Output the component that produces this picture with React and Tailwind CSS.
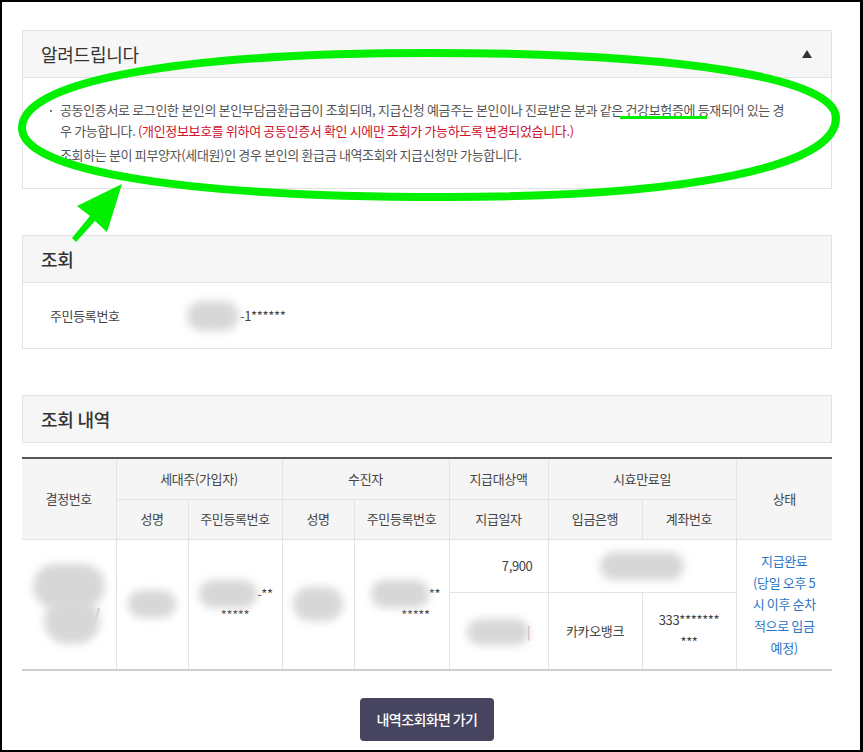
import React from "react";

function Blob({ c }) {
  return <span className={`inline-block shrink-0 rounded-full bg-[#d7d7d7] blur-[4px] ${c}`} />;
}

function PanelHeader({ title, weight, right }) {
  return (
    <div className="flex h-[46px] items-center justify-between bg-[#f6f6f6] pl-[18px] pr-[19px]">
      <h2 className={`text-[18px] tracking-[-0.25px] text-[#333] ${weight}`}>{title}</h2>
      {right}
    </div>
  );
}

export default function App() {
  return (
    <div className="relative h-[752px] w-[863px] overflow-hidden border-b-2 border-l-2 border-r-[3px] border-t-2 border-black bg-white font-['Noto_Sans_CJK_KR',sans-serif]">
      <div className="w-[830px] pl-5 pt-[28px]">
        {/* 알려드립니다 */}
        <section className="border border-[#e2e2e2]">
          <div className="border-b border-[#e2e2e2]">
            <PanelHeader
              title="알려드립니다"
              weight="font-normal"
              right={
                <svg width="10" height="8" viewBox="0 0 10 8">
                  <polygon points="5,0 10,8 0,8" fill="#333" />
                </svg>
              }
            />
          </div>
          <ul className="h-[110px] pl-[27px] pr-2 pt-[22px] text-[13px] leading-[20.5px] tracking-[-0.35px] text-[#555]">
            <li className="flex">
              <span className="mr-[8px] mt-[10px] h-[2px] w-[2px] shrink-0 bg-[#777]" />
              <span className="whitespace-nowrap">
                공동인증서로 로그인한 본인의 본인부담금환급금이 조회되며, 지급신청 예금주는 본인이나 진료받은 분과 같은 건강보험증에 등재되어 있는 경
                <br />
                우 가능합니다. <span className="text-[#d0112b]">(개인정보보호를 위하여 공동인증서 확인 시에만 조회가 가능하도록 변경되었습니다.)</span>
              </span>
            </li>
            <li className="mt-[4px] flex">
              <span className="mr-[8px] mt-[10px] h-[2px] w-[2px] shrink-0 bg-[#777]" />
              <span>조회하는 분이 피부양자(세대원)인 경우 본인의 환급금 내역조회와 지급신청만 가능합니다.</span>
            </li>
          </ul>
        </section>

        {/* 조회 */}
        <section className="mt-[46px] border border-[#e2e2e2]">
          <div className="border-b border-[#e2e2e2]">
            <PanelHeader title="조회" weight="font-medium" />
          </div>
          <div className="flex h-[65px] items-center pl-[27px] text-[13px] tracking-[-0.35px] text-[#444]">
            <span className="w-[137px]">주민등록번호</span>
            <Blob c="h-[30px] w-[52px]" />
            <span className="ml-[1px]">-1******</span>
          </div>
        </section>

        {/* 조회 내역 */}
        <section className="mt-[46px] border border-[#e2e2e2]">
          <PanelHeader title="조회 내역" weight="font-medium" />
        </section>

        <table className="mt-[14px] w-[810px] table-fixed border-collapse border-b-2 border-t-2 border-b-[#cfcfcf] border-t-[#555] text-[13px] tracking-[-0.35px] text-[#444]">
          <colgroup>
            <col className="w-[94px]" />
            <col className="w-[72px]" />
            <col className="w-[94px]" />
            <col className="w-[72px]" />
            <col className="w-[95px]" />
            <col className="w-[99px]" />
            <col className="w-[94px]" />
            <col className="w-[94px]" />
            <col className="w-[96px]" />
          </colgroup>
          <thead>
            <tr className="h-[41px]">
              <th rowSpan={2} className="border-b border-r border-[#e3e3e3] bg-[#f5f5f5] font-normal">결정번호</th>
              <th colSpan={2} className="border border-[#e3e3e3] bg-[#f5f5f5] font-normal">세대주(가입자)</th>
              <th colSpan={2} className="border border-[#e3e3e3] bg-[#f5f5f5] font-normal">수진자</th>
              <th className="border border-[#e3e3e3] bg-[#f5f5f5] font-normal">지급대상액</th>
              <th colSpan={2} className="border border-[#e3e3e3] bg-[#f5f5f5] font-normal">시효만료일</th>
              <th rowSpan={2} className="border-b border-l border-[#e3e3e3] bg-[#f5f5f5] font-normal">상태</th>
            </tr>
            <tr className="h-[40px]">
              <th className="border border-[#e3e3e3] bg-[#f5f5f5] font-normal">성명</th>
              <th className="border border-[#e3e3e3] bg-[#f5f5f5] font-normal">주민등록번호</th>
              <th className="border border-[#e3e3e3] bg-[#f5f5f5] font-normal">성명</th>
              <th className="border border-[#e3e3e3] bg-[#f5f5f5] font-normal">주민등록번호</th>
              <th className="border border-[#e3e3e3] bg-[#f5f5f5] font-normal">지급일자</th>
              <th className="border border-[#e3e3e3] bg-[#f5f5f5] font-normal">입금은행</th>
              <th className="border border-[#e3e3e3] bg-[#f5f5f5] font-normal">계좌번호</th>
            </tr>
          </thead>
          <tbody>
            <tr className="h-[53px]">
              <td rowSpan={2} className="border-r border-[#e3e3e3]">
                <div className="flex flex-col items-center">
                  <Blob c="h-[44px] w-[72px]" />
                  <div className="-mt-[10px] flex items-center pl-[6px]">
                    <Blob c="h-[46px] w-[56px]" />
                    <span className="-ml-[6px] -mt-[18px] text-[#999]">/</span>
                  </div>
                </div>
              </td>
              <td rowSpan={2} className="border border-[#e3e3e3]">
                <div className="flex justify-center">
                  <Blob c="h-[28px] w-[48px]" />
                </div>
              </td>
              <td rowSpan={2} className="border border-[#e3e3e3] text-center leading-[21px]">
                <div className="flex h-[21px] items-center justify-center pl-[2px]">
                  <Blob c="h-[28px] w-[58px]" />
                  <span>-**</span>
                </div>
                <div>*****</div>
              </td>
              <td rowSpan={2} className="border border-[#e3e3e3]">
                <div className="flex justify-center">
                  <Blob c="h-[34px] w-[50px]" />
                </div>
              </td>
              <td rowSpan={2} className="border border-[#e3e3e3] text-center leading-[21px]">
                <div className="flex h-[21px] items-center justify-center pl-[8px]">
                  <Blob c="h-[28px] w-[58px]" />
                  <span>**</span>
                </div>
                <div className="pl-[28px]">*****</div>
              </td>
              <td className="border border-[#e3e3e3] pr-[15px] text-right">7,900</td>
              <td colSpan={2} className="border border-[#e3e3e3]">
                <div className="flex justify-center">
                  <Blob c="h-[28px] w-[84px]" />
                </div>
              </td>
              <td rowSpan={2} className="border-l border-[#e3e3e3] text-center leading-[21.6px] text-[#2b74c4]">
                지급완료
                <br />
                (당일 오후 5
                <br />
                시 이후 순차
                <br />
                적으로 입금
                <br />
                예정)
              </td>
            </tr>
            <tr className="h-[78px]">
              <td className="border border-[#e3e3e3]">
                <div className="flex items-center justify-center pt-[2px]">
                  <Blob c="h-[26px] w-[62px]" />
                  <span className="-ml-[2px] text-[#999]">|</span>
                </div>
              </td>
              <td className="border border-[#e3e3e3] text-center">카카오뱅크</td>
              <td className="border border-[#e3e3e3] text-center leading-[22px]">
                333*******
                <br />
                ***
              </td>
            </tr>
          </tbody>
        </table>

        <div className="mt-[27px] flex justify-center">
          <button className="h-[43px] w-[134px] rounded-[4px] bg-[#46445f] text-[14px] font-medium tracking-[-0.6px] text-white">
            내역조회화면 가기
          </button>
        </div>
      </div>

      {/* annotations */}
      <svg className="pointer-events-none absolute left-[-2px] top-[-2px]" width="863" height="752" viewBox="0 0 863 752">
        <path
          d="M 22 128 C 22 81 177 53 430 53 C 682 53 836 78 836 118 C 836 167 687 197 445 197 C 183 197 22 171 22 128 Z"
          fill="none"
          stroke="#00f000"
          strokeWidth="8"
        />
        <rect x="620" y="116" width="87" height="3" fill="#00f000" />
        <polygon points="122,184 77,206 90,216 72,238 76,242 95,221 107,232" fill="#00f000" />
      </svg>
    </div>
  );
}
